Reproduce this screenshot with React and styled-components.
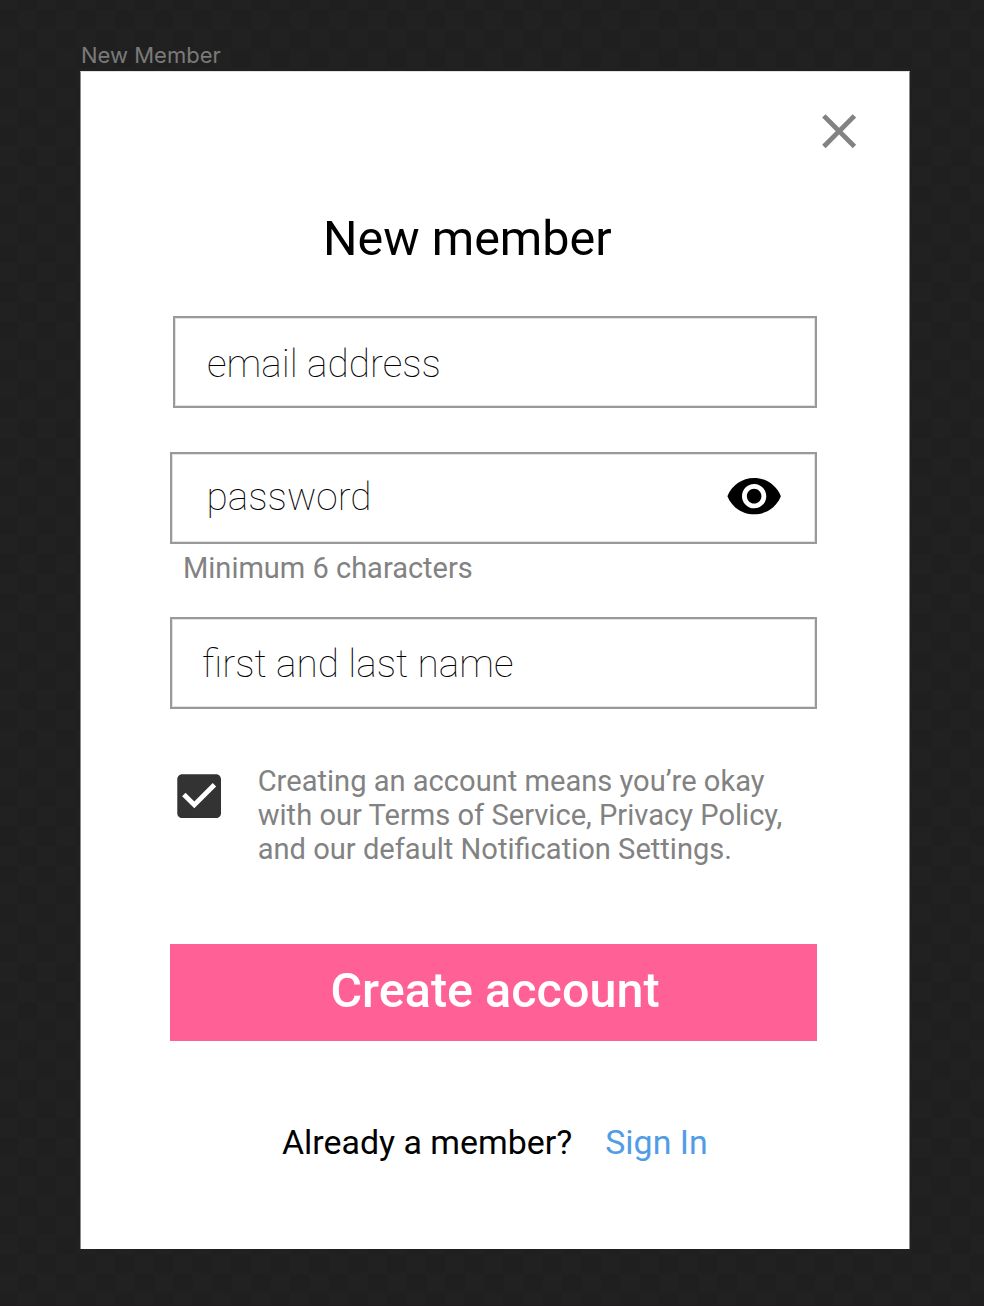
import React from "react";
import styled, { createGlobalStyle } from "styled-components";

const GlobalStyle = createGlobalStyle`
  * { box-sizing: border-box; }
  html, body { margin: 0; padding: 0; background: #202020; }
  body { overflow: hidden; font-family: Roboto, "Liberation Sans", sans-serif; }
  p, h1 { margin: 0; }
`;

const Canvas = styled.main`
  width: 984px;
  height: 1306px;
  padding: 41px 74px 0 80px;
  border-bottom: 1px solid #231a20;
  background: repeating-conic-gradient(#1f1f1f 0 25%, #212121 0 50%) 17.8px 10.3px / 38.88px 38.88px;
`;

const FrameLabel = styled.p`
  height: 30px;
  padding-left: 1px;
  font-family: Inter, "Liberation Sans", sans-serif;
  font-size: 22px;
  line-height: 28px;
  color: #7a7a7a;
  white-space: nowrap;
`;

const Dialog = styled.section`
  width: 830px;
  height: 1178px;
  display: flex;
  flex-direction: column;
  background: #fff;
  border: 1px solid #8a8a8a;
  border-top-color: #e2e2e2;
  border-bottom: 0;
  padding: 30px 92px 0 89px;
`;

const Glyph = styled.svg`
  display: block;
  flex: none;
  width: 58.3px;
  height: 58.3px;
  margin-bottom: ${(p) => p.$lift || 0}px;
  fill: ${(p) => p.$color};
`;

const CloseButton = styled.button`
  align-self: flex-end;
  width: 58px;
  height: 58px;
  margin-right: -51px;
  padding: 0;
  border: 0;
  background: none;
`;

const Title = styled.h1`
  height: 57px;
  margin: 50px 0 49px 153px;
  font-size: 48.45px;
  font-weight: 400;
  line-height: 57px;
  white-space: nowrap;
  color: #000;
`;

const Field = styled.div`
  display: flex;
  align-items: center;
  justify-content: space-between;
  height: 92px;
  margin-top: ${(p) => p.$gap || 0}px;
  margin-left: ${(p) => p.$indent || 0}px;
  padding: 0 ${(p) => p.$padRight || 0}px 0 ${(p) => p.$padLeft}px;
  border: 2px solid #999;
  box-shadow: inset 0 0 0 1px #e2e2e2;
`;

const Placeholder = styled.span`
  padding-top: ${(p) => p.$drop || 0}px;
  padding-bottom: ${(p) => p.$lift || 0}px;
  font-size: 38.8px;
  font-weight: 100;
  line-height: 46px;
  white-space: nowrap;
  color: #000;
`;

const Hint = styled.p`
  height: 34px;
  margin: 7px 0 0 13px;
  font-size: 29px;
  line-height: 34px;
  color: #828282;
  white-space: nowrap;
`;

const Consent = styled.div`
  display: flex;
  align-items: flex-start;
  height: 120px;
  margin-top: 55px;
`;

const CheckboxSlot = styled.div`
  padding-top: 2.5px;
`;

const Terms = styled.p`
  margin-left: 29.4px;
  font-size: 29.1px;
  line-height: 34px;
  color: #828282;
  white-space: nowrap;
`;

const Submit = styled.button`
  height: 97px;
  margin-top: 60px;
  padding: 0 0 4px 3px;
  border: 0;
  background: #ff6196;
  color: #fff;
  font-family: inherit;
  font-size: 48.5px;
  font-weight: 500;
  line-height: 57px;
  white-space: nowrap;
`;

const Footer = styled.div`
  display: flex;
  gap: 33px;
  margin: 82px 0 0 112px;
  font-size: 33.9px;
  line-height: 40px;
  white-space: nowrap;
  color: #000;
`;

const SignIn = styled.span`
  color: #509de6;
`;

export default function App() {
  return (
    <>
      <GlobalStyle />
      <Canvas>
        <FrameLabel>New Member</FrameLabel>
        <Dialog>
          <CloseButton aria-label="Close">
            <Glyph viewBox="0 0 24 24" $color="#828282">
              <path d="M19 6.41L17.59 5 12 10.59 6.41 5 5 6.41 10.59 12 5 17.59 6.41 19 12 13.41 17.59 19 19 17.59 13.41 12z" />
            </Glyph>
          </CloseButton>
          <Title>New member</Title>
          <Field $indent={3} $padLeft={32}>
            <Placeholder $drop={3}>email address</Placeholder>
          </Field>
          <Field $gap={44} $padLeft={34.6} $padRight={31.6}>
            <Placeholder $lift={3}>password</Placeholder>
            <Glyph viewBox="0 0 24 24" $color="#000" $lift={3}>
              <path d="M12 4.5C7 4.5 2.73 7.61 1 12c1.73 4.39 6 7.5 11 7.5s9.27-3.11 11-7.5c-1.73-4.39-6-7.5-11-7.5zM12 17c-2.76 0-5-2.24-5-5s2.24-5 5-5 5 2.24 5 5-2.24 5-5 5zm0-8c-1.66 0-3 1.34-3 3s1.34 3 3 3 3-1.34 3-3-1.34-3-3-3z" />
            </Glyph>
          </Field>
          <Hint>Minimum 6 characters</Hint>
          <Field $gap={32} $padLeft={30}>
            <Placeholder $drop={1}>first and last name</Placeholder>
          </Field>
          <Consent>
            <CheckboxSlot>
              <Glyph viewBox="0 0 24 24" $color="#333">
                <path d="M19 3H5c-1.11 0-2 .9-2 2v14c0 1.1.89 2 2 2h14c1.11 0 2-.9 2-2V5c0-1.1-.89-2-2-2zm-9 14l-5-5 1.41-1.41L10 14.17l7.59-7.59L19 8l-9 9z" />
              </Glyph>
            </CheckboxSlot>
            <Terms>
              Creating an account means you’re okay
              <br />
              with our Terms of Service, Privacy Policy,
              <br />
              and our default Notification Settings.
            </Terms>
          </Consent>
          <Submit>Create account</Submit>
          <Footer>
            <span>Already a member?</span>
            <SignIn>Sign In</SignIn>
          </Footer>
        </Dialog>
      </Canvas>
    </>
  );
}
